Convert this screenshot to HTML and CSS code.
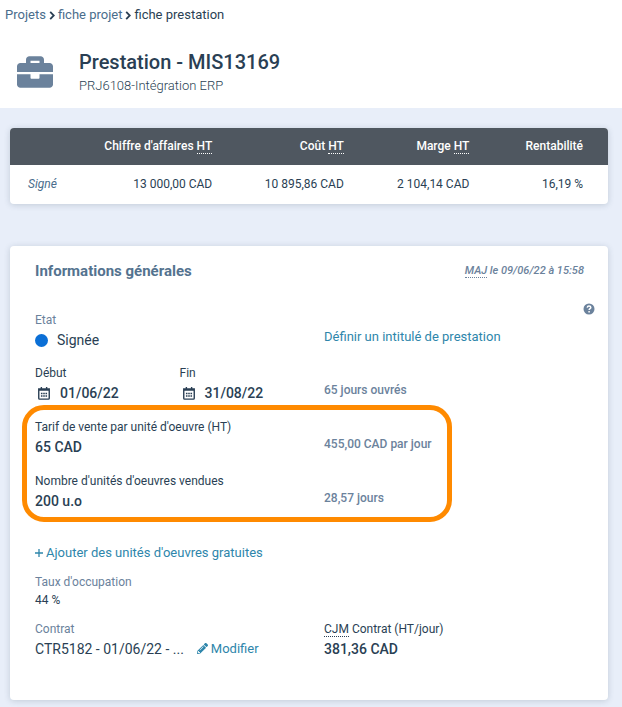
FILE: index.html
```
<!DOCTYPE html>
<html lang="fr">
<head>
  <meta charset="UTF-8" />
  <meta name="viewport" content="width=device-width, initial-scale=1.0"/>
  <title>Prestation - MIS13169</title>
  <link rel="stylesheet" href="styles.css">
</head>
<body>
  <header>
    <nav class="breadcrumb">
      <a href="#">Projets</a>
      <svg class="chevron" viewBox="0 0 6 10"><path d="M1 1l4 4-4 4"/></svg>
      <a href="#">fiche projet</a>
      <svg class="chevron" viewBox="0 0 6 10"><path d="M1 1l4 4-4 4"/></svg>
      <span>fiche prestation</span>
    </nav>
    <div class="page-title">
      <svg class="briefcase" viewBox="0 0 512 512"><path d="M320 336c0 8.840-7.160 16-16 16h-96c-8.840 0-16-7.160-16-16v-48H0v144c0 25.600 22.400 48 48 48h416c25.600 0 48-22.400 48-48V288H320v48zm144-208h-80V80c0-25.600-22.400-48-48-48H176c-25.600 0-48 22.400-48 48v48H48c-25.600 0-48 22.400-48 48v80h512v-80c0-25.600-22.400-48-48-48zm-144 0H192V96h128v32z"/></svg>
      <div>
        <h1>Prestation - MIS13169</h1>
        <p>PRJ6108-Intégration ERP</p>
      </div>
    </div>
  </header>

  <main>
    <table class="summary">
      <thead>
        <tr>
          <th class="col-state"></th>
          <th class="col-sales">Chiffre d'affaires <abbr>HT</abbr></th>
          <th class="col-cost">Coût <abbr>HT</abbr></th>
          <th class="col-margin">Marge <abbr>HT</abbr></th>
          <th class="col-profit">Rentabilité</th>
        </tr>
      </thead>
      <tbody>
        <tr>
          <td class="state">Signé</td>
          <td>13 000,00 CAD</td>
          <td>10 895,86 CAD</td>
          <td>2 104,14 CAD</td>
          <td>16,19 %</td>
        </tr>
      </tbody>
    </table>

    <section class="card">
      <div class="card-header">
        <h2>Informations générales</h2>
        <em><abbr>MAJ</abbr> le 09/06/22 à 15:58</em>
      </div>

      <div class="help">
        <svg viewBox="0 0 12 12"><circle cx="6" cy="6" r="5.500"/><path d="M4.200 4.600C4.400 3.500 5.100 3 6 3c1.100 0 1.800.600 1.800 1.500C7.800 5.700 6.100 5.600 6.100 7"/><path d="M6.100 8.100v1.300"/></svg>
      </div>

      <div class="row status">
        <div class="wide">
          <div class="label muted">Etat</div>
          <div class="value"><span class="dot"></span>Signée</div>
        </div>
        <a class="wide side" href="#">Définir un intitulé de prestation</a>
      </div>

      <div class="row">
        <div>
          <div class="label">Début</div>
          <div class="value strong">
            <svg class="calendar" viewBox="0 0 14 16"><path d="M1 3.500h12V14a1 1 0 0 1-1 1H2a1 1 0 0 1-1-1zM1 4.500h12M4 1v3M10 1v3"/><path class="days" d="M3.500 8.500h7M3.500 11.500h7"/></svg>01/06/22
          </div>
        </div>
        <div>
          <div class="label">Fin</div>
          <div class="value strong">
            <svg class="calendar" viewBox="0 0 14 16"><path d="M1 3.500h12V14a1 1 0 0 1-1 1H2a1 1 0 0 1-1-1zM1 4.500h12M4 1v3M10 1v3"/><path class="days" d="M3.500 8.500h7M3.500 11.500h7"/></svg>31/08/22
          </div>
        </div>
        <div class="wide side note">65 jours ouvrés</div>
      </div>

      <div class="highlight">
        <div class="row">
          <div class="wide">
            <div class="label">Tarif de vente par unité d'oeuvre (HT)</div>
            <div class="value strong">65 CAD</div>
          </div>
          <div class="wide side note">455,00 CAD par jour</div>
        </div>
        <div class="row">
          <div class="wide">
            <div class="label">Nombre d'unités d'oeuvres vendues</div>
            <div class="value strong">200 u.o</div>
          </div>
          <div class="wide side note">28,57 jours</div>
        </div>
      </div>

      <div class="add">
        <a href="#"><svg class="plus" viewBox="0 0 8 8"><path d="M4 0v8M0 4h8"/></svg>Ajouter des unités d'oeuvres gratuites</a>
      </div>

      <div class="row occupation">
        <div class="wide">
          <div class="label muted">Taux d'occupation</div>
          <div class="label">44 %</div>
        </div>
      </div>

      <div class="row">
        <div class="wide">
          <div class="label muted">Contrat</div>
          <div class="value contract">
            <span>CTR5182 - 01/06/22 - ...</span>
            <a href="#"><svg class="pencil" viewBox="0 0 512 512"><path d="M498 142l-46 46c-5 5-12 5-17 0L324 77c-5-5-5-12 0-17l46-46c19-19 49-19 68 0l60 60c19 19 19 49 0 68zM284 100L22 362 0 484c-3 16 12 30 28 28l122-22 262-262c5-5 5-12 0-17L301 100c-5-5-12-5-17 0zM124 340c-5-6-5-14 0-20l154-154c6-5 14-5 20 0s5 14 0 20L144 340c-6 5-14 5-20 0zm-36 84h48v36l-64 11-31-31 11-64h36z"/></svg>Modifier</a>
          </div>
        </div>
        <div class="wide">
          <div class="label"><abbr>CJM</abbr> Contrat (HT/jour)</div>
          <div class="value strong">381,36 CAD</div>
        </div>
      </div>
    </section>
  </main>
</body>
</html>
```
FILE: styles.css
```
* {
  box-sizing: border-box;
}

body {
  margin: 0;
  font-family: Roboto, "Liberation Sans", sans-serif;
  font-size: 13px;
  color: #2a3f54;
  background-color: #e8eef9;
}

h1, h2, p {
  margin: 0;
}

a {
  color: #2e86ab;
  text-decoration: none;
}

svg {
  flex: none;
}

header {
  background-color: white;
  padding: 5px 5px 12px;
}

.breadcrumb {
  display: flex;
  align-items: center;
  gap: 3px;
  line-height: 20px;
}

.breadcrumb a {
  color: #4a6d8c;
}

.chevron {
  width: 6px;
  height: 9px;
  fill: none;
  stroke: #2a3f54;
  stroke-width: 2;
}

.page-title {
  display: flex;
  align-items: center;
  gap: 26px;
  padding: 23px 12px 0;
}

.briefcase {
  width: 36px;
  height: 36px;
  fill: #6b829c;
}

h1 {
  font-size: 20px;
  line-height: 28px;
  font-weight: 500;
}

.page-title p {
  line-height: 20px;
  font-weight: 300;
}

main {
  padding: 20px 14px 7px 10px;
}

.summary {
  width: 100%;
  border-collapse: collapse;
  border-radius: 4px;
  overflow: hidden;
  background-color: white;
  font-size: 12px;
  line-height: 18px;
  text-align: right;
  box-shadow: 0 1px 6px rgba(42, 63, 84, 0.2);
}

.summary th {
  background-color: #4f5760;
  color: white;
  font-weight: 500;
  padding: 9px 25px 10px 0;
}

.summary td {
  padding: 10px 25px 11px 0;
}

.summary .state {
  padding-left: 18px;
  padding-right: 0;
  text-align: left;
  font-style: italic;
  color: #4a6d8c;
}

.col-state { width: 14%; }
.col-sales { width: 24%; }
.col-cost { width: 22%; }
.col-margin { width: 21%; }
.col-profit { width: 19%; }

.summary th,
.summary td {
  white-space: nowrap;
}

abbr {
  text-decoration: none;
  border-bottom: 1px dotted;
}

.card {
  margin-top: 42px;
  padding: 14px 10px 26px;
  background-color: white;
  border-radius: 4px;
  box-shadow: 0 1px 6px rgba(42, 63, 84, 0.2);
}

.card-header {
  display: flex;
  justify-content: space-between;
  align-items: center;
  padding: 0 14px 0 15px;
  line-height: 22px;
}

h2 {
  font-size: 15px;
  font-weight: 700;
  color: #54738f;
}

.card-header em {
  font-size: 11px;
  line-height: 14px;
  font-weight: 500;
  color: #6b829c;
}

.help {
  display: flex;
  justify-content: flex-end;
  padding-right: 3px;
  margin: 21px 0 -4px;
}

.help svg {
  width: 12px;
  height: 12px;
  fill: #6b829c;
}

.help path {
  fill: none;
  stroke: white;
  stroke-width: 1.5;
}

.row {
  display: grid;
  grid-template-columns: repeat(4, 1fr);
  margin-bottom: 14px;
}

.row > * {
  padding-left: 15px;
}

.status {
  margin-bottom: 13px;
}

.wide {
  grid-column: span 2;
}

.label {
  font-size: 12px;
  line-height: 18px;
}

.muted {
  color: #6b829c;
}

.value {
  display: flex;
  align-items: center;
  font-size: 14px;
  line-height: 22px;
}

.strong {
  font-weight: 500;
}

.side {
  align-self: end;
  line-height: 28px;
}

.note {
  font-size: 12px;
  font-weight: 500;
  color: #6b829c;
}

.dot {
  width: 13px;
  height: 13px;
  margin-right: 9px;
  border-radius: 50%;
  background-color: #0b6fd6;
}

.calendar {
  width: 14px;
  height: 14px;
  margin: 0 9px 0 2px;
  fill: none;
  stroke: #2a3f54;
  stroke-width: 1.6;
}

.calendar .days {
  stroke-dasharray: 1.8 0.8;
}

/* orange frame drawn around the two sale rows */
.highlight {
  position: relative;
}

.highlight::after {
  content: "";
  position: absolute;
  inset: -13px 146px -10px 2px;
  border: 5px solid #ff8a00;
  border-radius: 22px;
  pointer-events: none;
}

.highlight .row:last-child {
  margin-bottom: 0;
}

.add {
  margin-top: 30px;
  padding-left: 15px;
  line-height: 22px;
}

.plus {
  width: 8px;
  height: 8px;
  margin-right: 3px;
  stroke: #2e86ab;
  stroke-width: 1.3;
}

.occupation {
  margin: 9px 0 11px;
}

.contract {
  gap: 13px;
}

.contract a {
  font-size: 13px;
}

.pencil {
  width: 11px;
  height: 11px;
  margin-right: 3px;
  vertical-align: -1px;
  fill: #2e86ab;
}
```
